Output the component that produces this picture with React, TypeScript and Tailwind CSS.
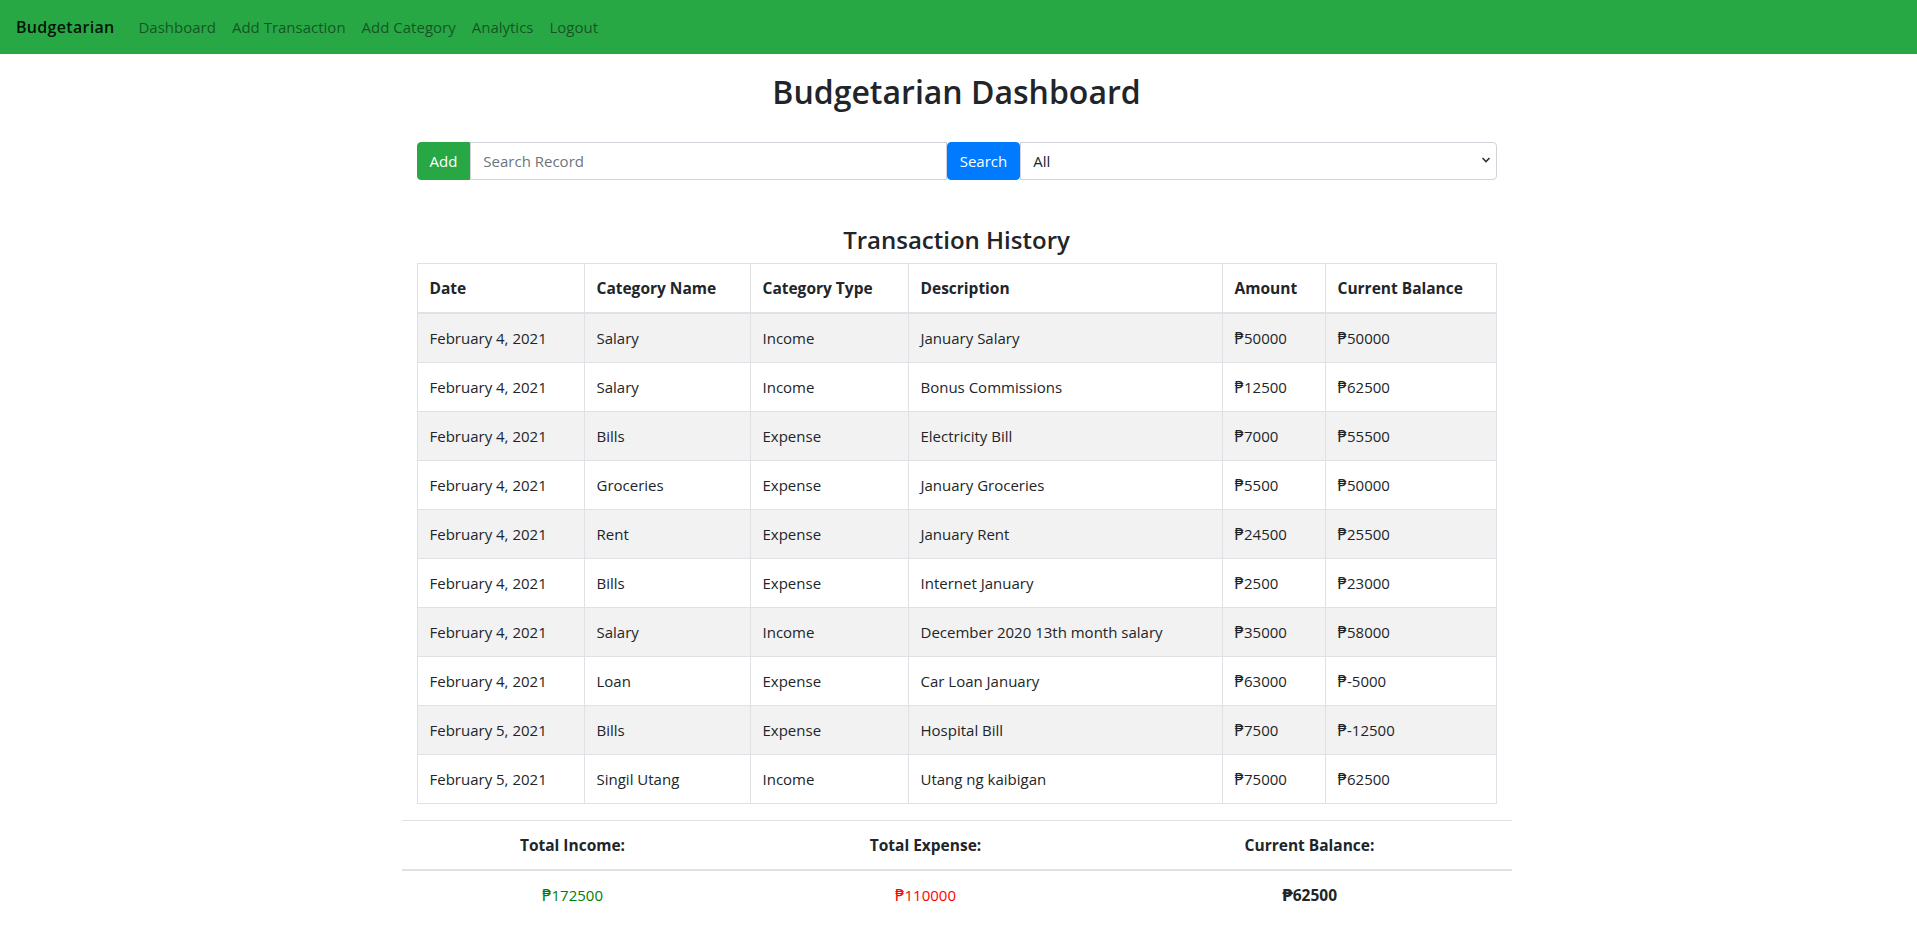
import { useState } from 'react';

// transaction records shown in the history table
const records = [
  { date: 'February 4, 2021', name: 'Salary', type: 'Income', desc: 'January Salary', amount: 50000, balance: 50000 },
  { date: 'February 4, 2021', name: 'Salary', type: 'Income', desc: 'Bonus Commissions', amount: 12500, balance: 62500 },
  { date: 'February 4, 2021', name: 'Bills', type: 'Expense', desc: 'Electricity Bill', amount: 7000, balance: 55500 },
  { date: 'February 4, 2021', name: 'Groceries', type: 'Expense', desc: 'January Groceries', amount: 5500, balance: 50000 },
  { date: 'February 4, 2021', name: 'Rent', type: 'Expense', desc: 'January Rent', amount: 24500, balance: 25500 },
  { date: 'February 4, 2021', name: 'Bills', type: 'Expense', desc: 'Internet January', amount: 2500, balance: 23000 },
  { date: 'February 4, 2021', name: 'Salary', type: 'Income', desc: 'December 2020 13th month salary', amount: 35000, balance: 58000 },
  { date: 'February 4, 2021', name: 'Loan', type: 'Expense', desc: 'Car Loan January', amount: 63000, balance: -5000 },
  { date: 'February 5, 2021', name: 'Bills', type: 'Expense', desc: 'Hospital Bill', amount: 7500, balance: -12500 },
  { date: 'February 5, 2021', name: 'Singil Utang', type: 'Income', desc: 'Utang ng kaibigan', amount: 75000, balance: 62500 },
];

const headers = ['Date', 'Category Name', 'Category Type', 'Description', 'Amount', 'Current Balance'];

const Navbar = () => (
  <nav className="h-[54px] bg-[#28a745] flex items-center px-4">
    <a href="#" className="text-[16px] font-semibold tracking-[0.3px] text-black/90 mr-4">Budgetarian</a>
    <ul className="flex">
      {['Dashboard', 'Add Transaction', 'Add Category', 'Analytics', 'Logout'].map((l) => (
        <li key={l}>
          <a href="#" className="block px-2 text-[15px] text-black/50">{l}</a>
        </li>
      ))}
    </ul>
  </nav>
);

const App = () => {
  const [query, setQuery] = useState('');
  const [filter, setFilter] = useState('All');

  return (
    <div className="min-h-screen bg-white text-[#212529] font-['Segoe_UI','Open_Sans','DejaVu_Sans',sans-serif] text-[15px]">
      <Navbar />

      <div className="w-[1140px] ml-[calc(50%-572px)] px-[15px]">
        <h2 className="text-center text-[32px] leading-[1.2] font-semibold mt-[19px] mb-2">Budgetarian Dashboard</h2>

        {/* Search bar */}
        <div className="mx-[15px] mt-[31px] mb-[46px] flex h-[38px]">
          <button className="px-3 bg-[#28a745] text-white rounded-l-[4px] border border-[#28a745]">Add</button>
          <div className="flex-1">
            <input
              value={query}
              onChange={(e) => setQuery(e.target.value)}
              placeholder="Search Record"
              className="w-full h-full border border-[#ced4da] px-3 outline-none placeholder:text-[#6c757d]"
            />
          </div>
          <button className="px-3 bg-[#007bff] text-white rounded-[4px] border border-[#007bff]">Search</button>
          <div className="flex-1 relative">
            <select
              value={filter}
              onChange={(e) => setFilter(e.target.value)}
              className="w-full h-full appearance-none border border-[#ced4da] rounded-r-[4px] pl-3 pr-8 bg-white outline-none"
            >
              <option>All</option>
              <option>Income</option>
              <option>Expense</option>
            </select>
            <svg className="absolute right-[6px] top-[14px] pointer-events-none" width="10" height="8" viewBox="0 0 10 8">
              <path d="M1.5 2 L5 5.5 L8.5 2" fill="none" stroke="#333" strokeWidth="1.6" />
            </svg>
          </div>
        </div>

        <h4 className="text-center text-[24px] leading-[1.2] font-semibold mb-2">Transaction History</h4>

        {/* Transaction table */}
        <div className="px-[15px]">
          <table className="w-full table-fixed border-collapse mb-4">
            <colgroup>
              <col className="w-[167px]" />
              <col className="w-[166px]" />
              <col className="w-[158px]" />
              <col className="w-[314px]" />
              <col className="w-[103px]" />
              <col />
            </colgroup>
            <thead>
              <tr>
                {headers.map((h) => (
                  <th key={h} className="text-left text-[15.5px] font-bold p-3 leading-6 border border-[#dee2e6] border-b-2">{h}</th>
                ))}
              </tr>
            </thead>
            <tbody>
              {records.map((r, i) => (
                <tr key={i} className={i % 2 === 0 ? 'bg-[#f2f2f2]' : 'bg-white'}>
                  <td className="p-3 leading-6 border border-[#dee2e6]">{r.date}</td>
                  <td className="p-3 leading-6 border border-[#dee2e6]">{r.name}</td>
                  <td className="p-3 leading-6 border border-[#dee2e6]">{r.type}</td>
                  <td className="p-3 leading-6 border border-[#dee2e6]">{r.desc}</td>
                  <td className="p-3 leading-6 border border-[#dee2e6]">₱{r.amount}</td>
                  <td className="p-3 leading-6 border border-[#dee2e6]">₱{r.balance}</td>
                </tr>
              ))}
            </tbody>
          </table>
        </div>

        {/* Totals */}
        <table className="w-full table-fixed border-collapse text-center">
          <colgroup>
            <col className="w-[342px]" />
            <col className="w-[364px]" />
            <col />
          </colgroup>
          <thead>
            <tr>
              <th className="p-3 leading-6 text-[15.5px] font-bold border-t border-b-2 border-[#dee2e6]">Total Income:</th>
              <th className="p-3 leading-6 text-[15.5px] font-bold border-t border-b-2 border-[#dee2e6]">Total Expense:</th>
              <th className="p-3 leading-6 text-[15.5px] font-bold border-t border-b-2 border-[#dee2e6]">Current Balance:</th>
            </tr>
          </thead>
          <tbody>
            <tr>
              <td className="p-3 leading-6 text-[#008000]">₱172500</td>
              <td className="p-3 leading-6 text-[#ff0000]">₱110000</td>
              <td className="p-3 leading-6 text-[15.5px] font-bold">₱62500</td>
            </tr>
          </tbody>
        </table>
      </div>
    </div>
  );
};

export default App;
